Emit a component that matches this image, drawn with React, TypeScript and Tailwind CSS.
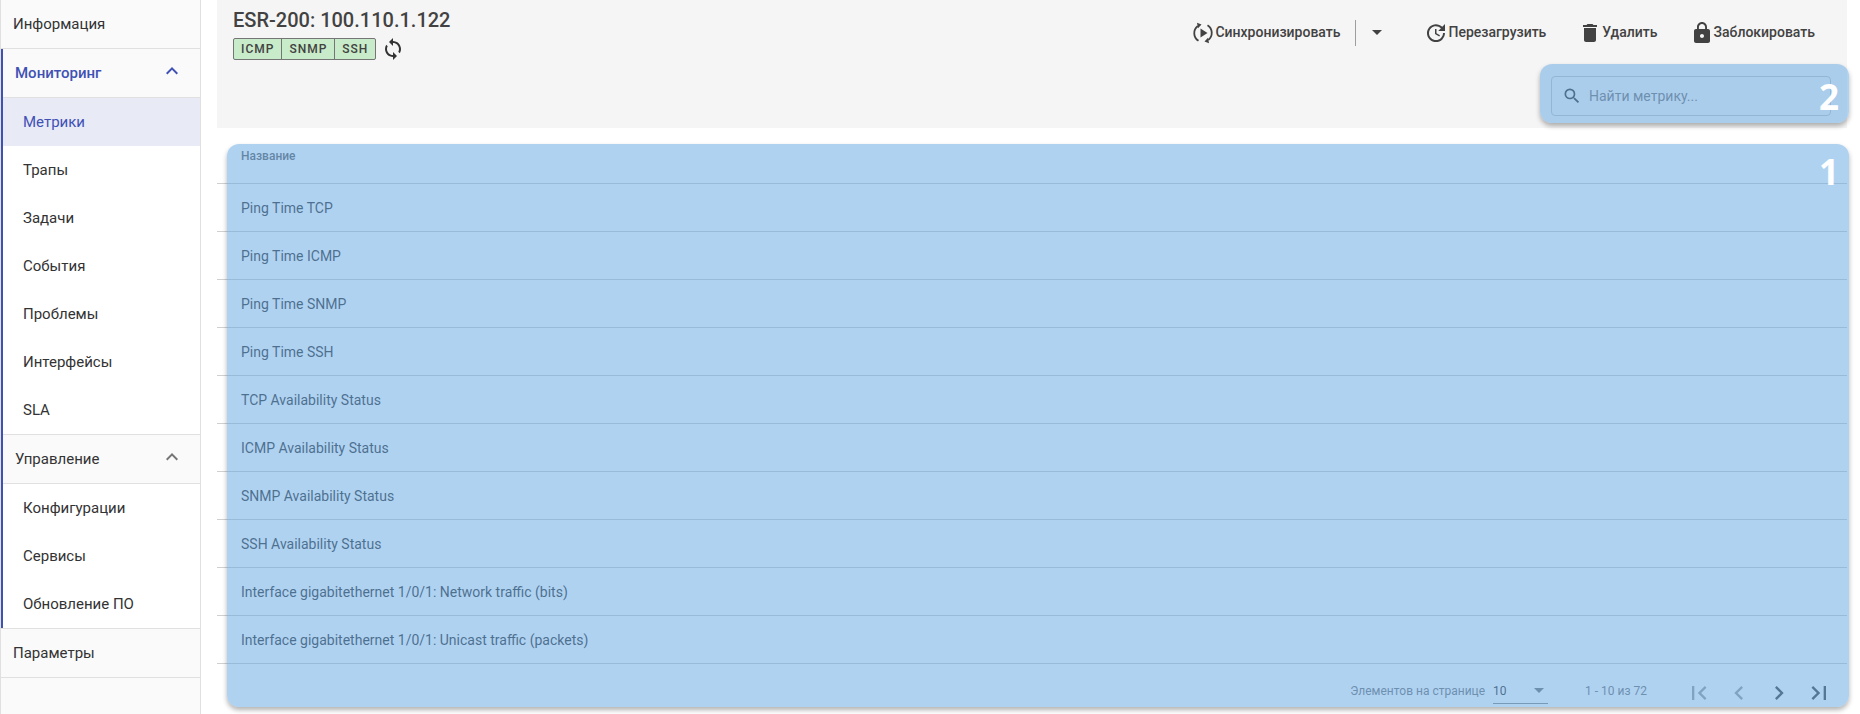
import type { ReactNode } from 'react';

const monitoring = ['Метрики', 'Трапы', 'Задачи', 'События', 'Проблемы', 'Интерфейсы', 'SLA'];
const management = ['Конфигурации', 'Сервисы', 'Обновление ПО'];
const metrics = [
  'Ping Time TCP',
  'Ping Time ICMP',
  'Ping Time SNMP',
  'Ping Time SSH',
  'TCP Availability Status',
  'ICMP Availability Status',
  'SNMP Availability Status',
  'SSH Availability Status',
  'Interface gigabitethernet 1/0/1: Network traffic (bits)',
  'Interface gigabitethernet 1/0/1: Unicast traffic (packets)',
];

const expandLess = 'M12 8l-6 6 1.41 1.41L12 10.83l4.59 4.58L18 14z';

function Icon({ d, className }: { d: string; className?: string }) {
  return (
    <svg viewBox="0 0 24 24" className={className} fill="currentColor">
      <path d={d} />
    </svg>
  );
}

function Action({ icon, label }: { icon: ReactNode; label: string }) {
  return (
    <div className="flex items-center text-[#424242]">
      {icon}
      <span className="text-[14px] font-medium">{label}</span>
    </div>
  );
}

function SyncPlayIcon() {
  return (
    <svg viewBox="0 0 24 24" className="w-6 h-6">
      <path d="M6.800 5A9 9 0 0 0 7.500 19.800" fill="none" stroke="currentColor" strokeWidth="1.800" />
      <path d="M17.200 19A9 9 0 0 0 16.500 4.200" fill="none" stroke="currentColor" strokeWidth="1.800" />
      <path d="M6 1.800 10.500 3.500 7 7.200zM18 22.200 13.500 20.500 17 16.800z" fill="currentColor" />
      <path d="M9.500 7.500 16.500 12 9.500 16.500z" fill="currentColor" />
    </svg>
  );
}

function Highlight({ num, className, numClass }: { num: string; className: string; numClass: string }) {
  return (
    <div className={`absolute rounded-[12px] bg-[rgba(103,169,229,0.52)] shadow-[0_3px_5px_rgba(0,0,0,0.3)] ${className}`}>
      <span className={`absolute right-[10px] font-['Open_Sans'] font-bold text-[35px] leading-none text-white ${numClass}`}>{num}</span>
    </div>
  );
}

export default function App() {
  return (
    <div className="flex h-[714px] overflow-hidden bg-white font-['Roboto',sans-serif] text-[#333]">
      {/* Sidebar */}
      <aside className="w-[201px] shrink-0 bg-[#fafafa] border-x border-[#e0e0e0] text-[15px]">
        <div className="h-[49px] pl-[12px] flex items-center border-b border-[#e0e0e0]">Информация</div>
        <div className="border-l-[2px] border-[#3f51b5]">
          <div className="h-[49px] pl-[12px] pr-[16px] flex items-center justify-between border-b border-[#e0e0e0] font-medium text-[#3f51b5]">
            Мониторинг
            <Icon d={expandLess} className="w-6 h-6 -mt-[4px]" />
          </div>
          {monitoring.map((item, i) => (
            <div key={item} className={`h-[48px] pl-[20px] flex items-center ${i === 0 ? 'bg-[#e8eaf6] text-[#3f51b5]' : 'bg-white'}`}>
              {item}
            </div>
          ))}
          <div className="h-[50px] pl-[12px] pr-[16px] flex items-center justify-between border-y border-[#e0e0e0]">
            Управление
            <Icon d={expandLess} className="w-6 h-6 -mt-[4px] text-[#757575]" />
          </div>
          {management.map((item) => (
            <div key={item} className="h-[48px] pl-[20px] flex items-center bg-white">
              {item}
            </div>
          ))}
        </div>
        <div className="h-[50px] pl-[12px] flex items-center border-y border-[#e0e0e0]">Параметры</div>
      </aside>

      {/* Main */}
      <main className="relative flex-1 pl-[16px] pr-[13px] min-w-0">
        <header className="h-[128px] bg-[#f5f5f5] flex justify-between pl-[16px] pr-[32px]">
          <div>
            <h1 className="text-[20px] font-medium leading-[24px] mt-[8px] text-[#424242]">ESR-200: 100.110.1.122</h1>
            <div className="flex items-center mt-[5px]">
              <div className="flex h-[22px] border border-[#757575] rounded-[2px] bg-[#c8ebc9] text-[12px] font-medium tracking-[1px] text-[#424242]">
                <span className="px-[7px] leading-[20px]">ICMP</span>
                <span className="px-[7px] leading-[20px] border-l border-[#757575]">SNMP</span>
                <span className="px-[7px] leading-[20px] border-l border-[#757575]">SSH</span>
              </div>
              <Icon
                className="w-6 h-6 ml-[5px] text-[#333]"
                d="M12 4V1L8 5l4 4V6c3.31 0 6 2.69 6 6 0 1.01-.25 1.97-.7 2.8l1.46 1.46C19.54 15.03 20 13.57 20 12c0-4.42-3.58-8-8-8zm0 14c-3.31 0-6-2.69-6-6 0-1.01.25-1.97.7-2.8L5.24 7.74C4.46 8.97 4 10.43 4 12c0 4.42 3.58 8 8 8v3l4-4-4-4v3z"
              />
            </div>
          </div>
          <div className="flex items-center h-[65px] gap-[32px]">
            <div className="flex items-center mr-[10px]">
              <Action label="Синхронизировать" icon={<SyncPlayIcon />} />
              <div className="w-px h-[26px] bg-[#9e9e9e] ml-[15px]" />
              <div className="w-0 h-0 ml-[16px] border-x-[5px] border-t-[5px] border-x-transparent border-t-[#424242]" />
            </div>
            <Action
              label="Перезагрузить"
              icon={
                <Icon
                  className="w-6 h-6"
                  d="M21 10.120h-6.780l2.740-2.820c-2.730-2.700-7.150-2.800-9.880-.100-2.730 2.710-2.730 7.080 0 9.790s7.150 2.710 9.880 0C18.320 15.650 19 14.080 19 12.100h2c0 1.980-.880 4.550-2.640 6.290-3.510 3.480-9.210 3.480-12.720 0-3.500-3.470-3.530-9.110-.020-12.580s9.140-3.470 12.650 0L21 3v7.120zM12.500 8v4.250l3.500 2.080-.720 1.210L11 13V8h1.500z"
                />
              }
            />
            <Action
              label="Удалить"
              icon={<Icon className="w-6 h-6" d="M6 19c0 1.100.9 2 2 2h8c1.100 0 2-.9 2-2V7H6v12zM19 4h-3.500l-1-1h-5l-1 1H5v2h14V4z" />}
            />
            <Action
              label="Заблокировать"
              icon={
                <Icon
                  className="w-6 h-6"
                  d="M18 8h-1V6c0-2.760-2.240-5-5-5S7 3.240 7 6v2H6c-1.100 0-2 .9-2 2v10c0 1.100.9 2 2 2h12c1.100 0 2-.9 2-2V10c0-1.100-.9-2-2-2zm-6 9c-1.100 0-2-.9-2-2s.9-2 2-2 2 .9 2 2-.9 2-2 2zm3.100-9H8.900V6c0-1.710 1.390-3.100 3.100-3.100 1.710 0 3.100 1.390 3.100 3.100v2z"
                />
              }
            />
          </div>
        </header>

        {/* Table */}
        <div className="mt-[16px] text-[14px]">
          <div className="h-[40px] border-b border-[#d0d0d0] pl-[24px] pt-[3px] text-[12px] font-medium text-[#616161]">Название</div>
          {metrics.map((name) => (
            <div key={name} className="h-[48px] border-b border-[#d0d0d0] pl-[24px] pt-[1px] flex items-center">
              {name}
            </div>
          ))}
          <div className="h-[54px] flex items-center justify-end text-[12px] text-[#757575] pr-[14px]">
            <span>Элементов на странице</span>
            <div className="w-[55px] h-[26px] ml-[8px] border-b border-[#8a8a8a] flex items-center justify-between text-[#333]">
              10
              <div className="w-0 h-0 mr-[4px] border-x-[5px] border-t-[5px] border-x-transparent border-t-[#757575]" />
            </div>
            <span className="ml-[37px]">1 - 10 из 72</span>
            <div className="flex items-center ml-[38px] mt-[3px] gap-[12px]">
              <Icon className="w-7 h-7 text-[#9e9e9e]" d="M18.410 16.590 13.820 12l4.590-4.590L17 6l-6 6 6 6zM6 6h2v12H6z" />
              <Icon className="w-7 h-7 text-[#9e9e9e]" d="M15.410 7.410 14 6l-6 6 6 6 1.410-1.410L10.830 12z" />
              <Icon className="w-7 h-7 text-[#424242]" d="M10 6 8.590 7.410 13.170 12l-4.580 4.590L10 18l6-6z" />
              <Icon className="w-7 h-7 text-[#424242]" d="M5.590 7.410 10.180 12l-4.590 4.590L7 18l6-6-6-6zM16 6h2v12h-2z" />
            </div>
          </div>
        </div>

        {/* Search field under its highlight */}
        <div className="absolute top-[76px] right-[29px] w-[280px] h-[40px] flex items-center pl-[10px] border border-[#c4c4c4] rounded-[4px] text-[#757575] text-[14px]">
          <Icon
            className="w-5 h-5 text-[#333]"
            d="M15.500 14h-.790l-.280-.270A6.470 6.470 0 0 0 16 9.500 6.500 6.500 0 1 0 9.500 16c1.610 0 3.090-.590 4.230-1.570l.270.280v.790l5 4.990L20.490 19l-4.990-5zm-6 0C7.010 14 5 11.990 5 9.500S7.010 5 9.500 5 14 7.010 14 9.500 11.990 14 9.500 14z"
          />
          <span className="ml-[7px]">Найти метрику...</span>
        </div>

        <Highlight num="2" numClass="top-[15px]" className="top-[64px] right-[11px] w-[309px] h-[59px]" />
        <Highlight num="1" numClass="top-[10px]" className="top-[144px] left-[26px] right-[11px] h-[563px]" />
      </main>
    </div>
  );
}
